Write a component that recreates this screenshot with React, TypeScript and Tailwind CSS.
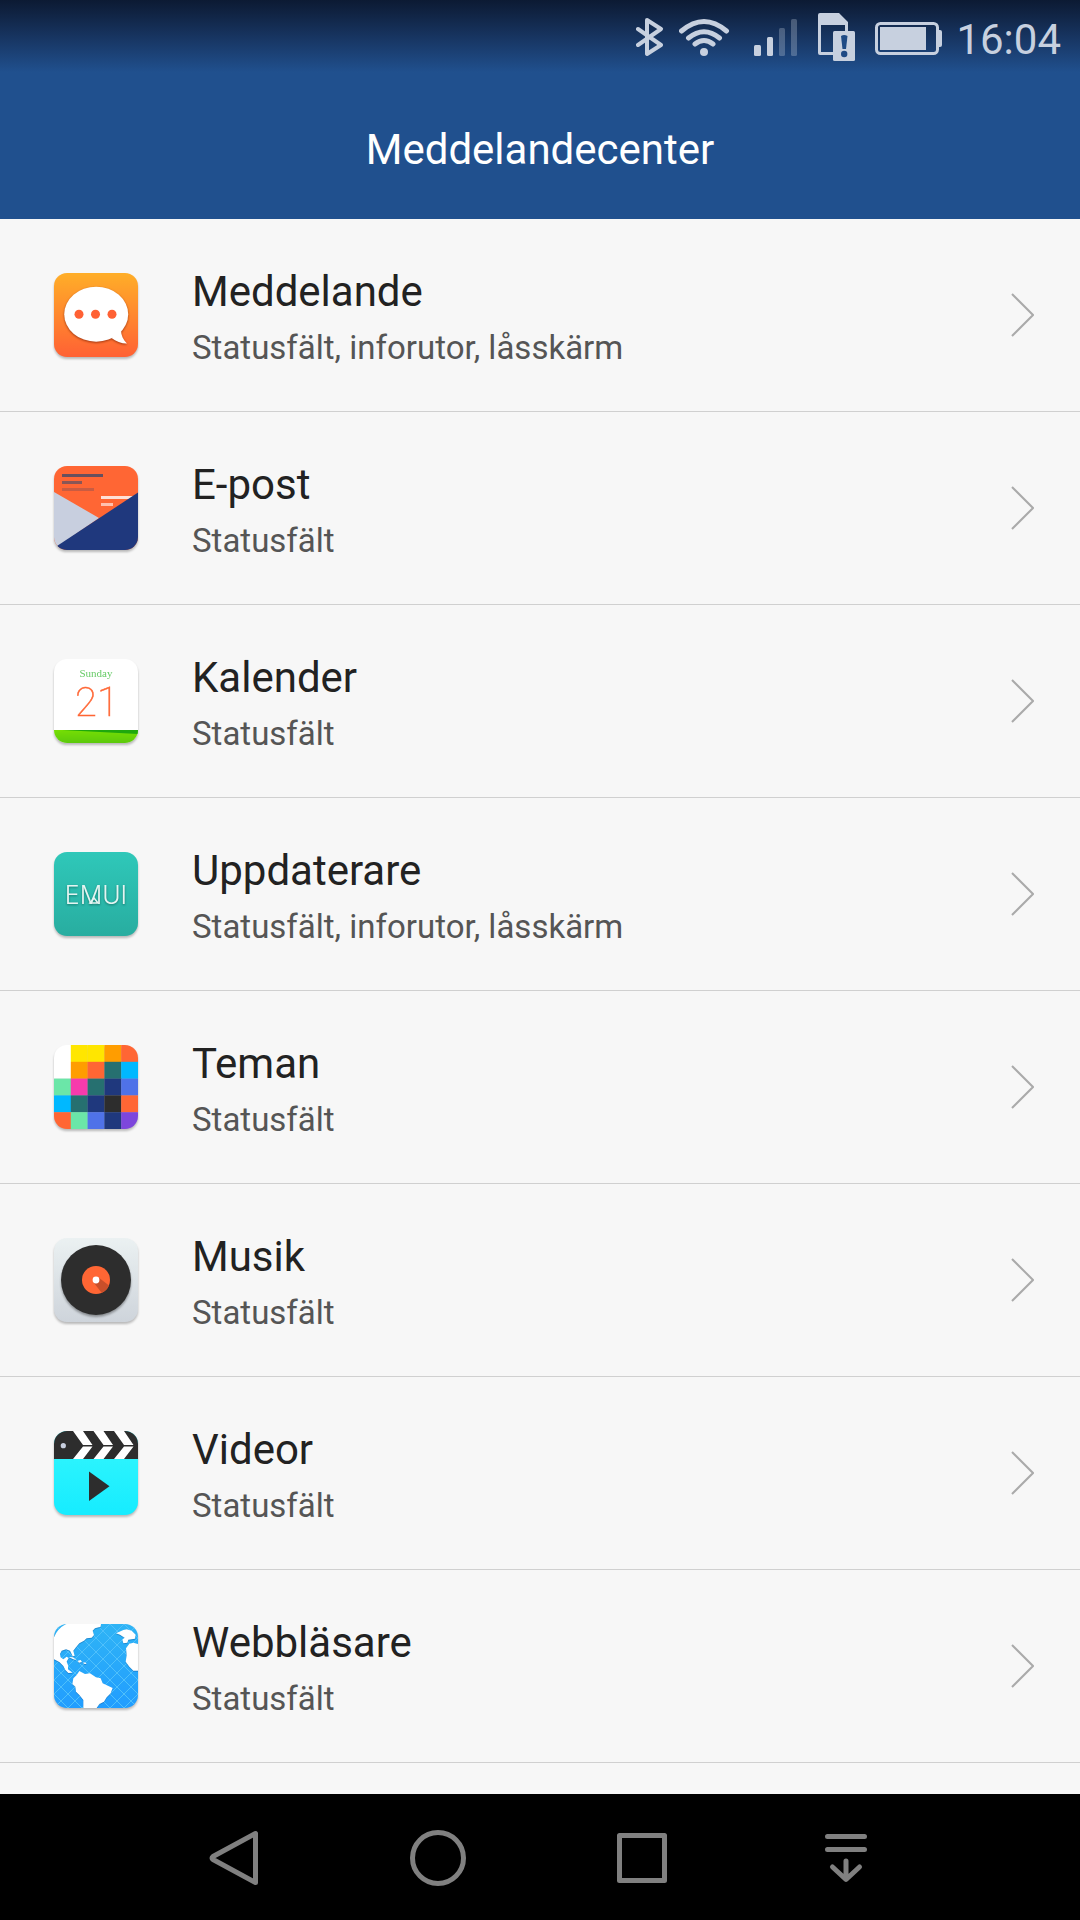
import { ReactNode } from "react";

interface AppEntry {
  id: string;
  name: string;
  detail: string;
  icon: ReactNode;
}

const AppIcon = ({ id, children }: { id: string; children: ReactNode }) => (
  <svg
    viewBox="0 0 84 84"
    className="size-[84px] shrink-0 drop-shadow-[0_2px_1px_rgba(0,0,0,0.25)]"
    aria-hidden="true"
  >
    <clipPath id={`${id}-clip`}>
      <rect width="84" height="84" rx="13" />
    </clipPath>
    <g clipPath={`url(#${id}-clip)`}>{children}</g>
  </svg>
);

const Gradient = ({ id, from, to }: { id: string; from: string; to: string }) => (
  <linearGradient id={id} x1="0" y1="0" x2="0" y2="1">
    <stop offset="0" stopColor={from} />
    <stop offset="1" stopColor={to} />
  </linearGradient>
);

const MessageIcon = () => (
  <AppIcon id="message">
    <Gradient id="message-bg" from="#ffae28" to="#ff6134" />
    <rect width="84" height="84" fill="url(#message-bg)" />
    <g className="drop-shadow-[0_1px_1px_rgba(120,30,0,0.7)]" fill="#fff">
      <ellipse cx="42.2" cy="41.2" rx="32" ry="27.5" />
      <path d="M67 57c0 5 2 10 6 13.500-6 0-11-2-15.500-5.500z" />
    </g>
    <g fill="#ff6134">
      <circle cx="25" cy="41.300" r="4.500" />
      <circle cx="41.500" cy="41.300" r="4.500" />
      <circle cx="58" cy="41.300" r="4.500" />
    </g>
  </AppIcon>
);

const MailIcon = () => (
  <AppIcon id="mail">
    <rect width="84" height="84" fill="#ff6634" />
    <path d="M8 8h41v3H8z" fill="#67505e" />
    <path d="M8 15h20v3H8z" fill="#8a5656" />
    <path d="M8 22h32v3H8z" fill="#c95c42" />
    <path d="M47 30h32v3H47z" fill="#ffe0d6" />
    <path d="M47 37h12v3H47z" fill="#ffc1ae" />
    <path d="M0 26l45 26L3 81l-3 3z" fill="#c8cfdf" />
    <path d="M84 26.500V84H0l3-4z" fill="#1f387d" />
  </AppIcon>
);

const CalendarIcon = () => (
  <AppIcon id="calendar">
    <Gradient id="calendar-base" from="#76de04" to="#5cc90c" />
    <rect width="84" height="84" fill="#fff" />
    <text x="42" y="18" textAnchor="middle" fill="#66cb66" className="font-['Liberation_Serif',serif] text-[11px]">
      Sunday
    </text>
    <text
      x="43"
      y="57"
      textAnchor="middle"
      fill="#ff6634"
      stroke="#ff6634"
      strokeWidth="0.500"
      className="font-[Roboto,sans-serif] text-[40px] font-thin"
    >
      21
    </text>
    <rect y="71" width="84" height="13" fill="url(#calendar-base)" />
    <path d="M8 71h76v4z" fill="#1fa80e" />
  </AppIcon>
);

const UpdaterIcon = () => (
  <AppIcon id="updater">
    <Gradient id="updater-bg" from="#2fc8b9" to="#28ada0" />
    <rect width="84" height="84" fill="url(#updater-bg)" />
    <g className="drop-shadow-[0_1px_1px_rgba(0,60,50,0.5)]">
      <text x="42" y="52" textAnchor="middle" fill="#e4f5f2" className="font-[Inter,sans-serif] text-[25px] font-light">
        EMUI
      </text>
      <path d="M40 46l-4 5h8z" fill="none" stroke="#e4f5f2" strokeWidth="1.500" />
    </g>
  </AppIcon>
);

const themeColors = [
  ["#ffffff", "#ffe600", "#ffe600", "#ff9d00", "#ff6634"],
  ["#ffffff", "#ff9d00", "#ff6634", "#267070", "#00b8ff"],
  ["#6be6a8", "#f73bac", "#267070", "#1f387d", "#4f72e8"],
  ["#00b8ff", "#267070", "#1f387d", "#2d2d2d", "#ff6634"],
  ["#ff6634", "#6be6a8", "#4f72e8", "#1f387d", "#7d46dc"],
];

const ThemesIcon = () => (
  <AppIcon id="themes">
    {themeColors.map((row, y) =>
      row.map((color, x) => (
        <rect key={`${x}-${y}`} x={x * 16.8} y={y * 16.8} width="17" height="17" fill={color} />
      ))
    )}
  </AppIcon>
);

const MusicIcon = () => (
  <AppIcon id="music">
    <Gradient id="music-bg" from="#ebf1f2" to="#ced4db" />
    <rect width="84" height="84" fill="url(#music-bg)" />
    <circle cx="42" cy="42" r="35" fill="#2d2d2d" className="drop-shadow-[0_2px_1px_rgba(0,0,0,0.35)]" />
    <circle cx="42" cy="42" r="14" fill="#ff6634" />
    <path d="M39.600 44.400l8 10.400a14 14 0 0 0 7.400-7.400l-10.500-8z" fill="#c94f2a" />
    <circle cx="42" cy="42" r="3.400" fill="#fff" />
  </AppIcon>
);

const VideoIcon = () => (
  <AppIcon id="video">
    <Gradient id="video-bg" from="#35f7fd" to="#16ecff" />
    <rect width="84" height="84" fill="url(#video-bg)" />
    <rect width="84" height="28" fill="#2d2d2d" />
    <g fill="#fff">
      {[0, 20.5, 41].map((x) => (
        <path key={x} transform={`translate(${x} 0)`} d="M19 0h10l9.500 14H29zM29 15.500h9.500L29 28H19z" />
      ))}
    </g>
    <circle cx="9.300" cy="14.700" r="2.600" fill="#c8cfdf" />
    <path d="M35 40.500L55.500 55.300 35 70z" fill="#2d2d2d" />
  </AppIcon>
);

const BrowserIcon = () => (
  <AppIcon id="browser">
    <Gradient id="browser-bg" from="#2fb4f5" to="#219dff" />
    <rect width="84" height="84" fill="url(#browser-bg)" />
    <path
      d="M-70 0l84 84M-56 0l84 84M-42 0l84 84M-28 0l84 84M-14 0l84 84M0 0l84 84M14 0l84 84M28 0l84 84M42 0l84 84M56 0l84 84M70 0l84 84M14 0l-84 84M28 0l-84 84M42 0l-84 84M56 0l-84 84M70 0l-84 84M84 0L0 84M98 0L14 84M112 0L28 84M126 0L42 84M140 0L56 84M154 0L70 84"
      stroke="#4fc0fb"
      strokeWidth="1"
    />
    <g transform="scale(.3333) translate(-42 -42)" fill="#fff" className="drop-shadow-[0_2px_1px_rgba(0,70,140,0.5)]">
      <path d="M42 82Q52 56 78 42H183l-1 8-17 5-7 7 4 13-7 8-15 2-8 7-14 8-10 12-8 10 4 16-6 1-8-17-12-4-13 4-5 10 2 10 8 6 10-8 6 4-6 11 4 10v13l14 10-13 1-9-9-6-12-12-12-16-8z" />
      <path d="M86 141l12 1 12 8-10-2zM113 152l9-2 4 6-9 2zM130 157l8 1 1 4-8-1z" />
      <path d="M118 183l17 9 15-2 18 12 14 3 6 15 30 14-6 16-12 12-8 13-14 7-8 12h-40v-24l-12-15-10-10-2-15-9-8 3-17 10-10z" />
      <path d="M228 70l22-10 10-2 15 4 12 12-2 12-20 3-3 9-12 2-3-11 7-6-14-9z" />
      <path d="M294 102l-14-4-12 3-10 14 2 20-3 20 11 15 12 12h14z" />
    </g>
  </AppIcon>
);

const apps: AppEntry[] = [
  { id: "meddelande", name: "Meddelande", detail: "Statusfält, inforutor, låsskärm", icon: <MessageIcon /> },
  { id: "epost", name: "E-post", detail: "Statusfält", icon: <MailIcon /> },
  { id: "kalender", name: "Kalender", detail: "Statusfält", icon: <CalendarIcon /> },
  { id: "uppdaterare", name: "Uppdaterare", detail: "Statusfält, inforutor, låsskärm", icon: <UpdaterIcon /> },
  { id: "teman", name: "Teman", detail: "Statusfält", icon: <ThemesIcon /> },
  { id: "musik", name: "Musik", detail: "Statusfält", icon: <MusicIcon /> },
  { id: "videor", name: "Videor", detail: "Statusfält", icon: <VideoIcon /> },
  { id: "webblasare", name: "Webbläsare", detail: "Statusfält", icon: <BrowserIcon /> },
];

const StatusBar = () => (
  <div className="flex h-20 items-center justify-end gap-[14px] bg-linear-to-b from-[#0c1a33] via-[#183765] to-[#20508e] to-90% pr-[19px] text-[#c7d0df]">
    <svg viewBox="636 0 29 80" className="h-20 w-[29px]" fill="none" stroke="currentColor" strokeWidth="4" strokeLinecap="round" strokeLinejoin="round">
      <path d="M638 29l23 16-14 9V20l14 9-23 16" />
    </svg>
    <svg viewBox="679 0 52 80" className="h-20 w-[52px]" fill="none" stroke="currentColor" strokeWidth="5" strokeLinecap="round">
      <path d="M681.500 31Q704 12 726.500 31M688.500 38q15.500-12.500 31 0M695 44q9-7 18 0" />
      <circle cx="704" cy="52" r="4" fill="currentColor" stroke="none" />
    </svg>
    <svg viewBox="745 0 54 80" className="h-20 w-[54px]" fill="currentColor">
      <rect x="754" y="45" width="7" height="11" rx="1.500" />
      <rect x="767" y="37" width="6" height="19" rx="1.500" />
      <rect x="779" y="28" width="6" height="28" rx="1.500" opacity="0.3" />
      <rect x="791" y="19" width="6" height="37" rx="1.500" opacity="0.3" />
    </svg>
    <svg viewBox="813 0 48 80" className="h-20 w-[48px]" fill="currentColor">
      <path
        fillRule="evenodd"
        d="M820 13h19l9 9v33h-28a2 2 0 0 1-2-2V15a2 2 0 0 1 2-2zM821 25v27h24V25z"
      />
      <rect x="833" y="31" width="22" height="30" rx="1.500" />
      <path d="M841 36q3-2 6.500 0l-1.500 13h-3.500z" fill="#1e4a85" />
      <circle cx="844.200" cy="54" r="3.200" fill="#1e4a85" />
    </svg>
    <svg viewBox="875 0 67 80" className="h-20 w-[67px]" fill="currentColor">
      <rect x="876.500" y="23.500" width="61" height="30" rx="4" fill="none" stroke="currentColor" strokeWidth="3" />
      <rect x="880" y="27" width="46" height="23" />
      <path d="M939 30h1a2 2 0 0 1 2 2v13a2 2 0 0 1-2 2h-1z" />
    </svg>
    <time className="text-[42px] leading-[48px]">16:04</time>
  </div>
);

const NavBar = () => (
  <nav className="flex h-[126px] items-center justify-center bg-black pt-[2px] text-[#808080]">
    <button aria-label="Tillbaka" className="flex w-[204px] justify-center">
      <svg viewBox="0 0 60 60" className="size-[60px]" fill="none" stroke="currentColor" strokeWidth="5" strokeLinejoin="round">
        <path d="M51.500 5.500v49L9 31.500q-2-1.500 0-3z" />
      </svg>
    </button>
    <button aria-label="Hem" className="flex w-[204px] justify-center">
      <svg viewBox="0 0 60 60" className="size-[60px]" fill="none" stroke="currentColor" strokeWidth="5">
        <circle cx="30" cy="30" r="25.500" />
      </svg>
    </button>
    <button aria-label="Senaste" className="flex w-[204px] justify-center">
      <svg viewBox="0 0 60 60" className="size-[60px]" fill="none" stroke="currentColor" strokeWidth="5" strokeLinejoin="round">
        <rect x="7.500" y="7.500" width="45" height="45" />
      </svg>
    </button>
    <button aria-label="Meddelanden" className="flex w-[204px] justify-center">
      <svg viewBox="0 0 60 60" className="size-[60px]" fill="none" stroke="currentColor" strokeWidth="5" strokeLinecap="round" strokeLinejoin="round">
        <path d="M11.500 8.500h37M11.500 21.500h37M30 33v18M16.500 39L30 51.500 43.500 39" />
      </svg>
    </button>
  </nav>
);

const App = () => {
  return (
    <div className="flex min-h-screen flex-col bg-[#f7f7f7] font-[Roboto,sans-serif]">
      <header className="bg-[#20508e]">
        <StatusBar />
        <h1 className="flex h-[139px] items-center justify-center text-[42px] leading-[48px] text-white">
          Meddelandecenter
        </h1>
      </header>

      <ul className="flex-1">
        {apps.map((app) => (
          <li key={app.id} className="border-b border-[#d0d0d0]">
            <a href={`#${app.id}`} className="flex h-48 items-center pr-[46px] pl-[54px]">
              {app.icon}
              <div className="ml-[54px] flex-1 pt-[2px]">
                <div className="text-[42px] leading-[64px] text-[#222]">{app.name}</div>
                <div className="text-[33px] leading-[48px] text-[#555]">{app.detail}</div>
              </div>
              <svg viewBox="0 0 23 44" className="h-[44px] w-[23px]" fill="none" stroke="#aaa" strokeWidth="2">
                <path d="M1 1l21 21L1 43" />
              </svg>
            </a>
          </li>
        ))}
      </ul>

      <NavBar />
    </div>
  );
};

export default App;
